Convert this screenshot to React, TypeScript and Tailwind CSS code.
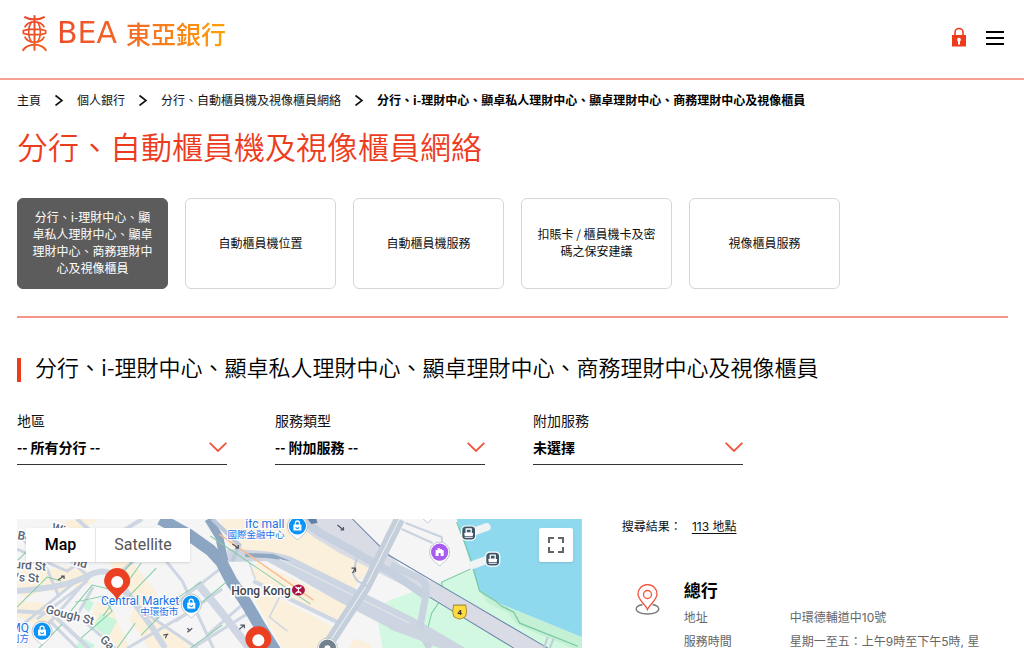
import type { ReactNode } from 'react';

const PAGE_TITLE = '分行、自動櫃員機及視像櫃員網絡';
const SECTION_TITLE =
  '分行、i-理財中心、顯卓私人理財中心、顯卓理財中心、商務理財中心及視像櫃員';

const BREADCRUMBS = ['主頁', '個人銀行', PAGE_TITLE, SECTION_TITLE];

const TABS = [
  SECTION_TITLE,
  '自動櫃員機位置',
  '自動櫃員機服務',
  '扣賬卡 / 櫃員機卡及密碼之保安建議',
  '視像櫃員服務',
];

const FILTERS = [
  { id: 'district', label: '地區', value: '-- 所有分行 --' },
  { id: 'service', label: '服務類型', value: '-- 附加服務 --' },
  { id: 'extra', label: '附加服務', value: '未選擇' },
];

const BRANCH_ROWS = [
  { label: '地址', value: '中環德輔道中10號' },
  { label: '服務時間', value: '星期一至五：上午9時至下午5時, 星' },
];

function Logo() {
  return (
    <a href="#" className="flex items-center gap-[10px]">
      <svg
        viewBox="64 44 76 114"
        className="h-[38px] w-[25px]"
        fill="none"
        stroke="url(#emblem)"
        strokeWidth="6"
      >
        <defs>
          <linearGradient id="emblem" gradientUnits="userSpaceOnUse" x1="64" y1="46" x2="140" y2="156">
            <stop offset="0" stopColor="#e8402a" />
            <stop offset="1" stopColor="#f26322" />
          </linearGradient>
        </defs>
        <path d="M71 52Q84 60 102 60Q120 60 133 52M102 47V155M66 155Q76 138 102 136Q128 138 138 155" />
        <path d="M72 84Q80 67 102 67Q124 67 132 84M72 112Q80 129 102 129Q124 129 132 112" strokeWidth="5" />
        <path d="M94 67C81 82 81 114 94 129M110 67C123 82 123 114 110 129" strokeWidth="5" />
        <path d="M84 90H120M84 106H120M84 90L68 94V102L84 106M120 90L136 94V102L120 106" strokeWidth="5" />
      </svg>
      <span className="flex items-center gap-[9px] bg-linear-to-r from-[#ee4b2b] via-[#f37021] to-[#ffa000] bg-clip-text text-transparent">
        <span className="font-['DejaVu_Sans','Inter',sans-serif] text-[30px] leading-9">BEA</span>
        <span className="text-[25px] leading-9 font-medium">東亞銀行</span>
      </span>
    </a>
  );
}

function Header() {
  return (
    <header className="flex h-20 items-start justify-between border-b-2 border-[#f4a193] pt-[14px] pr-[18px] pl-[22px]">
      <Logo />
      <div className="flex items-center gap-4 pt-[13px]">
        <a href="#" aria-label="登入">
          <svg viewBox="0 0 18 22" className="h-[22px] w-[18px]">
            <path d="M5 9V5.500a4 4 0 0 1 8 0V9" fill="none" stroke="#ed3c1d" strokeWidth="1.600" />
            <path d="M2 8h14v11.500H2z" fill="#ed3c1d" />
            <path d="M9 10.800a1.900 1.900 0 0 1 1 3.500v3.200H8v-3.200a1.900 1.900 0 0 1 1-3.500z" fill="#fff" />
          </svg>
        </a>
        <button type="button" aria-label="選單" className="flex w-[22px] flex-col items-center gap-1">
          <span className="h-0.5 w-[18px] bg-black" />
          <span className="h-0.5 w-[18px] bg-black" />
          <span className="h-0.5 w-[18px] bg-black" />
        </button>
      </div>
    </header>
  );
}

function Breadcrumbs() {
  return (
    <nav>
      <ol className="flex items-center gap-[13px] text-xs leading-6">
        {BREADCRUMBS.map((crumb, i) => {
          const last = i === BREADCRUMBS.length - 1;
          return (
            <li key={crumb} className="flex items-center gap-[13px]">
              {i > 0 && (
                <svg viewBox="0 0 10 12" className="h-3 w-2.5" fill="none" stroke="#111" strokeWidth="1.600">
                  <path d="M1.500 1.500L8 6.500L1.500 11.500" />
                </svg>
              )}
              {last ? (
                <span className="font-bold text-black">{crumb}</span>
              ) : (
                <a href="#">{crumb}</a>
              )}
            </li>
          );
        })}
      </ol>
    </nav>
  );
}

function FilterSelect({ id, label, value }: { id: string; label: string; value: string }) {
  return (
    <div className="w-[210px]">
      <label htmlFor={id} className="block text-sm leading-5">
        {label}
      </label>
      <div className="relative">
        <select
          id={id}
          className="block h-[35px] w-full appearance-none border-b border-[#333] bg-white pb-px text-sm font-bold text-black outline-none"
        >
          <option>{value}</option>
        </select>
        <svg
          viewBox="0 0 18 10"
          className="pointer-events-none absolute top-3 right-0 h-2.5 w-[18px]"
          fill="none"
          stroke="#f0553c"
          strokeWidth="1.800"
        >
          <path d="M.7.800L9 9L17.300.800" />
        </svg>
      </div>
    </div>
  );
}

function Pin({ x, y, color, children }: { x: number; y: number; color: string; children?: ReactNode }) {
  return (
    <g transform={`translate(${x} ${y})`}>
      <path
        d="M0 14C-2 11 -10 8 -10 0A10 10 0 0 1 10 0C10 8 2 11 0 14Z"
        fill="#fff"
        stroke="#b5bac2"
        strokeWidth=".8"
      />
      <circle r="8.600" fill={color} />
      {children}
    </g>
  );
}

function Bag() {
  return (
    <>
      <path d="M-4 -1.500H4V4.500H-4Z" fill="#fff" />
      <path d="M-2 -1V-3A2 2 0 0 1 2 -3V-1" fill="none" stroke="#fff" strokeWidth="1.300" />
      <path d="M-1.500 1A1.500 1.500 0 0 0 1.500 1" fill="none" stroke="#0b93f5" />
    </>
  );
}

function Ferry({ x, y }: { x: number; y: number }) {
  return (
    <g transform={`translate(${x} ${y})`}>
      <rect x="-7" y="-7" width="14" height="14" rx="4" fill="#3f5568" stroke="#fff" strokeWidth="1.200" />
      <path d="M-2.500 -4H2.500V0H-2.500Z" fill="none" stroke="#fff" strokeWidth="1.300" />
      <path d="M-4.500 0H4.500L4 3H-4ZM-4 3.800H4V4.800H-4Z" fill="#fff" />
    </g>
  );
}

function BranchMarker({ x, y }: { x: number; y: number }) {
  return (
    <g transform={`translate(${x} ${y})`}>
      <path d="M0 20C-1 11 -13 8 -13 -1A13 13 0 0 1 13 -1C13 8 1 11 0 20Z" fill="#ec4023" />
      <circle r="6" fill="#fff" />
    </g>
  );
}

function MapCanvas() {
  return (
    <svg
      viewBox="0 0 564 129"
      className="block h-auto w-full overflow-visible font-['Roboto','Noto_Sans_CJK_TC',sans-serif]"
    >
      <rect width="564" height="140" fill="#f5f5f6" />

      {/* Built-up blocks */}
      <g fill="#fbf0db">
        <path d="M0 48H20L34 68L8 80L0 70Z" />
        <path d="M8 54L68 45L74 64L40 73L12 70Z" />
        <path d="M0 82L32 84L50 98L30 109L0 98Z" />
        <path d="M92 42L116 44L140 75L122 92L100 66Z" />
        <path d="M80 82L96 91L112 129H92L73 99Z" />
        <path d="M118 86L176 124L170 129H132L112 100Z" />
        <path d="M203 0H273L300 18L320 25L352 49L336 70L242 35L212 28Z" />
        <path d="M240 43L332 86L322 104L249 70L232 54Z" />
        <path d="M248 72L316 108L306 129H265L238 82Z" />
        <path d="M336 119L354 125L352 129H332Z" />
        <path d="M38 5L58 0H82L62 12Z" />
      </g>
      <g fill="#c9f5dc">
        <path d="M70 80L77 84L72 93L65 87Z" />
        <path d="M84 94L100 101L91 119L76 107Z" />
        <path d="M64 118L78 126L75 129H58Z" />
      </g>

      {/* Harbour and waterfront park */}
      <path d="M358 88L373 81L423 63L455 51L461 71L483 85L564 118V135H366Z" fill="#d2f8e1" />
      <path d="M439 0H564V118L483 85L461 71L455 51Z" fill="#8fd9ee" />
      <path d="M461 71L483 85L564 118V129H555L500 106L490 94L470 84Z" fill="#c4f0d5" />
      <path d="M439 3L452 37L462 72L478 82L484 87L496 93L502 104L560 127" fill="none" stroke="#78c9a3" strokeWidth="1.200" />
      <path d="M453 50L424 63L425 78L414 94L410 110" fill="none" stroke="#78c9a3" />
      <path d="M455 13L469 8M455 46L474 39" stroke="#eff3f4" strokeWidth="8" strokeLinecap="round" />

      {/* Side streets */}
      <g fill="none" stroke="#cdd6e2" strokeWidth="3">
        <path d="M0 30L50 52L112 10M20 100L70 62M0 110L64 58" />
        <path d="M0 12L30 50L42 78M54 42L72 58L20 118M32 101L60 129" />
        <path d="M127 15L165 62L196 129M102 54L143 20M136 102L205 48" />
        <path d="M158 102L205 70M190 116L229 82M175 129L236 91" />
        <path d="M98 66L130 95L180 129M110 129L184 86M76 68L60 96L98 129" />
        <path d="M262 78L252 98L270 112M238 60L232 44" strokeWidth="1.500" />
      </g>
      <path d="M236 62L262 75L322 104" fill="none" stroke="#ced7e3" strokeWidth="4" />
      <g fill="none" stroke="#ced7e3" strokeWidth="6">
        <path d="M0 72C35 69 55 65 72 56C90 48 96 54 106 68L134 107L148 129" />
        <path d="M0 92L34 94L72 129" strokeWidth="4" />
        <path d="M180 64L208 98L232 129" strokeWidth="8" />
        <path d="M60 0L82 20L112 40M92 20L125 0M76 12L101 23" strokeWidth="4" />
      </g>

      {/* Connaught Road corridor */}
      <path d="M273 0H335L383 46L455 84L530 129V135H506L412 78L383 65L322 34L296 18Z" fill="#d9dce5" />
      <path d="M283 0L303 14L323 25L378 56L410 78" fill="none" stroke="#c7d0de" strokeWidth="8" />
      <path d="M335 0L371 36L453 84L530 129M412 78L496 129" fill="none" stroke="#6985ab" />
      <path d="M290 0H299L300 4L294 5Z" fill="#617fa8" />
      <path d="M210 30C238 31 258 32 274 38L395 98L448 129H423L378 112L320 82L275 56L249 42L210 43Z" fill="#ccd5e1" />
      <path d="M228 34L256 35L273 42L250 39L228 38Z" fill="#8fa7c1" />
      <path d="M262 40L392 104" stroke="#e4e8ee" />
      <path d="M382 0L348 68L308 129" fill="none" stroke="#c5cfdb" strokeWidth="11" />
      <path d="M382 0L348 68L308 129" fill="none" stroke="#eef0f4" />
      <path d="M388 4L424 18L425 27M384 10L415 24" fill="none" stroke="#c9d2df" strokeWidth="2" />
      <path d="M373 46L400 58Q411 63 408 77L402 110L412 129" fill="none" stroke="#c9d2df" strokeWidth="7" />
      <path d="M373 105L398 113L448 135" fill="none" stroke="#cdd5e0" strokeWidth="10" />
      <path d="M352 68L340 62L336 56L339 39M530 118L526 129M536 119L532 129" fill="none" stroke="#c2ccdb" strokeWidth="2" />

      {/* Expressway */}
      <path d="M143 0L172 16L193 31L204 43L214 62L229 84L243 108L258 132" fill="none" stroke="#8ca5c2" strokeWidth="12" />
      <path d="M191 0L202 18L207 42" fill="none" stroke="#8fa6c1" strokeWidth="8" />
      <path d="M195 0L222 26L215 42" fill="none" stroke="#bdc9d8" strokeWidth="4" />

      {/* Rail and tram lines */}
      <g fill="none" stroke="#83cda5">
        <path d="M52 94L75 66L96 71M0 88L30 58L44 62M64 119L95 92L86 77L58 83" />
        <path d="M124 116L160 79L184 63M86 97L124 44M103 57L128 27M112 77L139 49M185 83L210 62M193 17L293 85" />
        <path d="M0 42L10 32M22 129L45 105M173 129L205 106M100 129L118 104" />
      </g>
      <path d="M202 15L296 81" stroke="#f6bd92" strokeWidth="1.500" />

      {/* One-way arrows */}
      <g fill="none" stroke="#4d5661" strokeWidth="1.200">
        <path d="M41 61L47 57M44 57H47V60M215 25L221 29M221 26V29H218M320 6L326 11M326 8V11H323M335 54L338 49M338 53V49H334M222 110L227 106M223 106H227V109" />
        <path d="M148 119L150 115M146 116L151 115M170 113L175 109M170 109L173 112" />
      </g>

      {/* Street names */}
      <g fill="#596475" stroke="#fff" strokeWidth="3" paintOrder="stroke" fontSize="12" fontWeight="500">
        <text x="0" y="20" transform="rotate(10 0 20)">Bo</text>
        <text x="34" y="12" transform="rotate(15 34 12)">Wing</text>
        <text x="-3" y="49" transform="rotate(5 -3 49)">urd St</text>
        <text x="-3" y="62" transform="rotate(3 -3 62)">/s St</text>
        <text x="56" y="46" transform="rotate(14 56 46)">nd</text>
        <text x="28" y="94" transform="rotate(14 28 94)">Gough St</text>
        <text x="82" y="121" transform="rotate(45 82 121)">Ga</text>
      </g>

      {/* Places */}
      <g fill="#1a73e8" stroke="#fff" strokeWidth="2" paintOrder="stroke" fontSize="12" textAnchor="end">
        <text x="267" y="9">ifc mall</text>
        <text x="267" y="19" fontSize="9.500">國際金融中心</text>
        <text x="162" y="86">Central Market</text>
        <text x="161" y="96" fontSize="9.500">中環街市</text>
        <text x="12" y="113">MQ</text>
        <text x="12" y="123" fontSize="9.500">創方</text>
      </g>
      <text x="214" y="76" fill="#3b444f" stroke="#fff" strokeWidth="3" paintOrder="stroke" fontSize="12" fontWeight="500">
        Hong Kong
      </text>
      <ellipse cx="281" cy="71" rx="6.500" ry="5.500" fill="#ad1243" />
      <path d="M278 67.500Q281 71.500 284 67.500M278 74.500Q281 70.500 284 74.500M281 68V74" fill="none" stroke="#fff" strokeWidth="1.200" />

      <Pin x={280} y={7} color="#0b93f5"><Bag /></Pin>
      <Pin x={174} y={85} color="#0b93f5"><Bag /></Pin>
      <Pin x={25} y={112} color="#0b93f5"><Bag /></Pin>
      <Pin x={410} y={-10} color="#8a96a3" />
      <Pin x={422} y={33} color="#a95cf0">
        <path d="M-4 4V-2H-2V-4H0V-3H2V-2H4V4H1V1H-1V4Z" fill="#fff" />
      </Pin>
      <Pin x={310} y={129} color="#71828d">
        <circle r="3" fill="#fff" />
      </Pin>
      <Ferry x={451} y={14} />
      <Ferry x={475} y={40} />
      <path d="M436 86H448Q450 95 447 98L442 100L437 98Q434 95 436 86Z" fill="#ffdb3f" stroke="#a99132" />
      <text x="442" y="96" textAnchor="middle" fontSize="8" fontWeight="700" fill="#333">4</text>

      <BranchMarker x={100} y={63} />
      <BranchMarker x={241} y={121} />
    </svg>
  );
}

function BranchMap() {
  return (
    <div className="relative w-[57%] shrink-0 overflow-hidden bg-[#f5f5f6] font-['Roboto',sans-serif]">
      <MapCanvas />
      <div className="absolute top-[9px] left-[9px] flex h-[34px] bg-white shadow-sm">
        <button type="button" className="w-[70px] border-r border-[#e6e6e6] text-base font-medium text-black">
          Map
        </button>
        <button type="button" className="w-[94px] text-base text-[#565656]">
          Satellite
        </button>
      </div>
      <button
        type="button"
        aria-label="Toggle fullscreen view"
        className="absolute top-[9px] right-[9px] flex size-[34px] items-center justify-center rounded-xs bg-white shadow-sm"
      >
        <svg viewBox="0 0 16 16" className="size-4" fill="none" stroke="#666" strokeWidth="2">
          <path d="M1 6V1H6M10 1H15V6M15 10V15H10M6 15H1V10" />
        </svg>
      </button>
    </div>
  );
}

function BranchList() {
  return (
    <div className="min-w-0 flex-1 font-['Inter','Noto_Sans_CJK_TC',sans-serif] text-xs">
      <p className="mt-[-4px] flex gap-[10px] leading-6">
        <span>搜尋結果：</span>
        <a href="#" className="underline underline-offset-2">
          113 地點
        </a>
      </p>
      <article className="mt-[38px] flex gap-6 pl-[13px]">
        <svg viewBox="0 0 25 32" className="mt-[7px] h-8 w-[25px] shrink-0" fill="none" strokeWidth="1.300">
          <path
            d="M7.500 20.500C3.500 21.300 1.200 23 1.200 25C1.200 27.900 6 30 12.500 30S23.800 27.900 23.800 25C23.800 23 21.500 21.300 17.500 20.500"
            stroke="#777"
          />
          <path
            d="M12.500 25.500C11 21 3 16 3 10A9.500 9.500 0 0 1 22 10C22 16 14 21 12.500 25.500Z"
            stroke="#f0553c"
          />
          <circle cx="12.500" cy="10.500" r="4" stroke="#f0553c" />
        </svg>
        <div className="min-w-0 flex-1">
          <h3 className="mb-px text-[17px] leading-7 font-bold text-black">總行</h3>
          <dl className="grid grid-cols-[106px_1fr] leading-6 text-[#666]">
            {BRANCH_ROWS.map((row) => (
              <div key={row.label} className="contents">
                <dt>{row.label}</dt>
                <dd>{row.value}</dd>
              </div>
            ))}
          </dl>
        </div>
      </article>
    </div>
  );
}

export default function App() {
  return (
    <div
      lang="zh-HK"
      className="flex min-h-screen flex-col bg-white font-['Noto_Sans_CJK_TC',sans-serif] text-[#111]"
    >
      <Header />
      <main className="flex flex-1 flex-col pt-2 pr-4 pl-[17px]">
        <Breadcrumbs />
        <h1 className="mt-[14px] text-[31px] leading-10 font-[350] text-[#ed3c1d]">{PAGE_TITLE}</h1>

        {/* Page tabs */}
        <nav className="mt-8 grid grid-cols-6 gap-[17px]">
          {TABS.map((tab, i) => (
            <a
              key={tab}
              href="#"
              className={`flex h-[91px] items-center justify-center rounded-md border px-[14px] pb-[3px] text-center text-xs leading-[17px] ${
                i === 0 ? 'border-[#5c5c5c] bg-[#5c5c5c] text-white' : 'border-[#d6d6d6] bg-white'
              }`}
            >
              {tab}
            </a>
          ))}
        </nav>
        <hr className="mt-[27px] border-t-2 border-[#f5958a]" />

        <h2 className="mt-10 border-l-4 border-[#ed3c1d] pb-2 pl-[14px] text-[22px] leading-4 font-[350] text-black">
          {SECTION_TITLE}
        </h2>
        <form className="mt-7 flex gap-12">
          {FILTERS.map((filter) => (
            <FilterSelect key={filter.id} {...filter} />
          ))}
        </form>

        <section className="mt-[54px] flex flex-1 gap-10">
          <BranchMap />
          <BranchList />
        </section>
      </main>
    </div>
  );
}
